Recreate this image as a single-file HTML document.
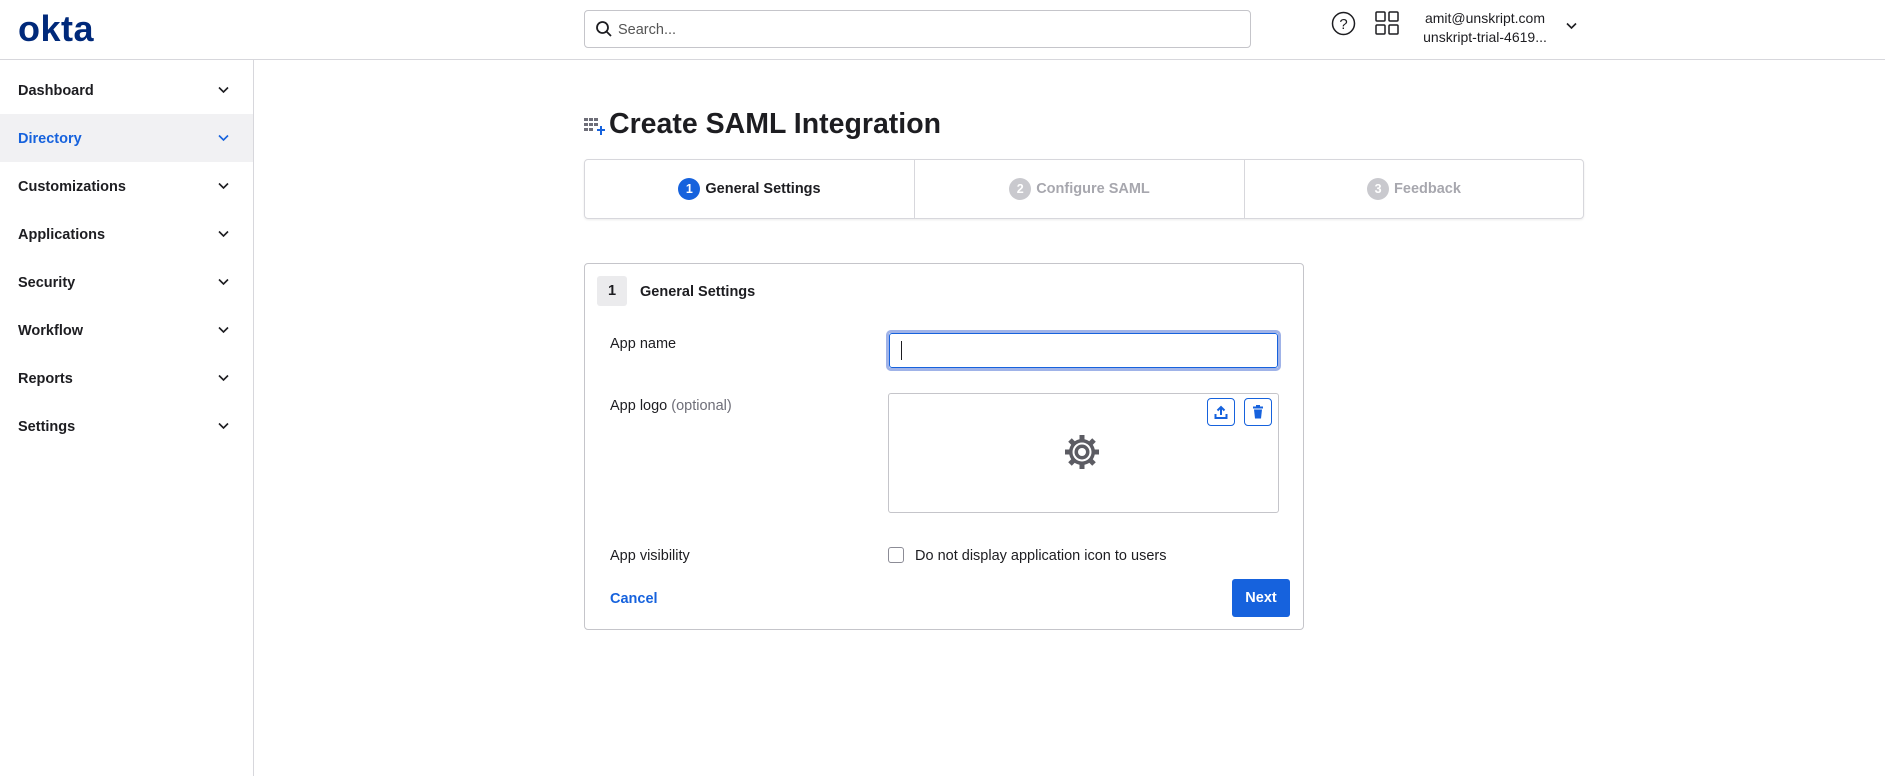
<!DOCTYPE html>
<html><head><meta charset="utf-8"><style>
*{box-sizing:border-box;margin:0;padding:0}
body{width:1885px;height:776px;background:#fff;font-family:"Liberation Sans",sans-serif;color:#1d1d21;position:relative;overflow:hidden;font-size:14.5px}
.abs{position:absolute}
.hdr{left:0;top:0;width:1885px;height:60px;border-bottom:1px solid #d7d7dc}
.side{left:0;top:60px;width:254px;height:716px;border-right:1px solid #d7d7dc}
.item{position:absolute;left:0;width:253px;height:48px;font-weight:bold;font-size:14.5px;padding-left:18px;line-height:50px}
.item svg{position:absolute;left:218px;top:20px}
.step{position:absolute;top:0;height:58px;display:flex;align-items:center;justify-content:center;font-weight:bold;font-size:14.5px;color:#a7a7ae}
.num{width:22px;height:22px;border-radius:50%;background:#c9c9ce;color:#fff;font-size:12.5px;text-align:center;line-height:22px;margin-right:5px}
.lbl{position:absolute;left:610px;font-size:14.5px}
</style></head><body>
<div class="abs hdr"></div>
<div class="abs" style="left:18px;top:8px;font-size:36px;font-weight:bold;color:#00297a;letter-spacing:0.5px">okta</div>
<div class="abs" style="left:584px;top:10px;width:667px;height:38px;border:1px solid #c5c5ca;border-radius:4px"></div>
<svg class="abs" style="left:595px;top:20px" width="18" height="18" viewBox="0 0 18 18"><circle cx="7.5" cy="7.5" r="5.5" fill="none" stroke="#1d1d21" stroke-width="1.8"/><path d="M11.5 11.5L16 16" stroke="#1d1d21" stroke-width="1.8"/></svg>
<div class="abs" style="left:618px;top:22px;color:#555;font-size:14.5px">Search...</div>
<svg class="abs" style="left:1331px;top:11px" width="25" height="25" viewBox="0 0 25 25"><circle cx="12.5" cy="12.5" r="11" fill="none" stroke="#1d1d21" stroke-width="1.5"/><text x="12.5" y="18" text-anchor="middle" font-size="15" font-family="Liberation Sans" fill="#1d1d21">?</text></svg>
<svg class="abs" style="left:1375px;top:11px" width="25" height="25" viewBox="0 0 25 25" fill="none" stroke="#1d1d21" stroke-width="1.5"><rect x="1" y="1" width="9" height="9" rx="1"/><rect x="14" y="1" width="9" height="9" rx="1"/><rect x="1" y="14" width="9" height="9" rx="1"/><rect x="14" y="14" width="9" height="9" rx="1"/></svg>
<div class="abs" style="left:1417px;top:9px;width:136px;text-align:center;font-size:14px;line-height:19px">amit@unskript.com<br>unskript-trial-4619...</div>
<svg class="abs" style="left:1566px;top:22px" width="11" height="8" viewBox="0 0 11 8"><path d="M1 1.5L5.5 6L10 1.5" fill="none" stroke="#1d1d21" stroke-width="1.6"/></svg>
<div class="abs side"></div>
<div class="abs" style="left:0;top:114px;width:253px;height:48px;background:#f1f1f3"></div>
<div class="item" style="top:66px">Dashboard<svg width="11" height="8" viewBox="0 0 11 8"><path d="M1 1.5L5.5 6L10 1.5" fill="none" stroke="#1d1d21" stroke-width="1.6"/></svg></div>
<div class="item" style="top:114px;color:#1662dd">Directory<svg width="11" height="8" viewBox="0 0 11 8"><path d="M1 1.5L5.5 6L10 1.5" fill="none" stroke="#1662dd" stroke-width="1.6"/></svg></div>
<div class="item" style="top:162px">Customizations<svg width="11" height="8" viewBox="0 0 11 8"><path d="M1 1.5L5.5 6L10 1.5" fill="none" stroke="#1d1d21" stroke-width="1.6"/></svg></div>
<div class="item" style="top:210px">Applications<svg width="11" height="8" viewBox="0 0 11 8"><path d="M1 1.5L5.5 6L10 1.5" fill="none" stroke="#1d1d21" stroke-width="1.6"/></svg></div>
<div class="item" style="top:258px">Security<svg width="11" height="8" viewBox="0 0 11 8"><path d="M1 1.5L5.5 6L10 1.5" fill="none" stroke="#1d1d21" stroke-width="1.6"/></svg></div>
<div class="item" style="top:306px">Workflow<svg width="11" height="8" viewBox="0 0 11 8"><path d="M1 1.5L5.5 6L10 1.5" fill="none" stroke="#1d1d21" stroke-width="1.6"/></svg></div>
<div class="item" style="top:354px">Reports<svg width="11" height="8" viewBox="0 0 11 8"><path d="M1 1.5L5.5 6L10 1.5" fill="none" stroke="#1d1d21" stroke-width="1.6"/></svg></div>
<div class="item" style="top:402px">Settings<svg width="11" height="8" viewBox="0 0 11 8"><path d="M1 1.5L5.5 6L10 1.5" fill="none" stroke="#1d1d21" stroke-width="1.6"/></svg></div>

<svg class="abs" style="left:584px;top:116px" width="24" height="24" viewBox="0 0 24 24" fill="#6e6e78"><rect x="0" y="2" width="4" height="3"/><rect x="5" y="2" width="4" height="3"/><rect x="10" y="2" width="4" height="3"/><rect x="0" y="7" width="4" height="3"/><rect x="5" y="7" width="4" height="3"/><rect x="10" y="7" width="4" height="3"/><rect x="0" y="12" width="4" height="3"/><rect x="5" y="12" width="4" height="3"/><path d="M13 13h3v-3h2v3h3v2h-3v4h-2v-4h-3z" fill="#1662dd"/></svg>
<div class="abs" style="left:609px;top:108px;font-size:28.5px;font-weight:bold;color:#1d1d21">Create SAML Integration</div>

<div class="abs" style="left:584px;top:159px;width:1000px;height:60px;border:1px solid #d7d7dc;border-radius:4px;box-shadow:0 1px 2px rgba(0,0,0,.08)">
<div class="step" style="left:0;width:329px;color:#1d1d21"><span class="num" style="background:#1662dd">1</span>General Settings</div>
<div class="step" style="left:329px;width:330px;border-left:1px solid #d7d7dc"><span class="num">2</span>Configure SAML</div>
<div class="step" style="left:659px;width:339px;border-left:1px solid #d7d7dc"><span class="num">3</span>Feedback</div>
</div>

<div class="abs" style="left:584px;top:263px;width:720px;height:367px;border:1px solid #c5c5ca;border-radius:4px"></div>
<div class="abs" style="left:597px;top:276px;width:30px;height:30px;background:#ebebed;border-radius:3px;text-align:center;line-height:30px;font-weight:bold;font-size:14.5px">1</div>
<div class="abs" style="left:640px;top:284px;font-weight:bold;font-size:14.5px">General Settings</div>
<div class="lbl" style="top:336px">App name</div>
<div class="abs" style="left:886px;top:330px;width:395px;height:41px;border:3px solid #a0b3e8;border-radius:5px"></div>
<div class="abs" style="left:889px;top:333px;width:389px;height:35px;border:1px solid #1662dd;border-radius:3px;background:#fff"></div>
<div class="abs" style="left:901px;top:341px;width:1px;height:19px;background:#1d1d21"></div>
<div class="lbl" style="top:398px">App logo <span style="color:#6e6e78">(optional)</span></div>
<div class="abs" style="left:888px;top:393px;width:391px;height:120px;border:1px solid #c5c5ca;border-radius:3px"></div>
<div class="abs" style="left:1207px;top:398px;width:28px;height:28px;border:1px solid #1662dd;border-radius:4px"></div>
<svg class="abs" style="left:1213px;top:404px" width="16" height="16" viewBox="0 0 16 16" fill="none" stroke="#1662dd" stroke-width="2"><path d="M8 11V3M4.5 6.5L8 3l3.5 3.5M2.5 10v4h11v-4"/></svg>
<div class="abs" style="left:1244px;top:398px;width:28px;height:28px;border:1px solid #1662dd;border-radius:4px"></div>
<svg class="abs" style="left:1250px;top:404px" width="16" height="16" viewBox="0 0 16 16" fill="#1662dd"><rect x="3" y="2.5" width="10" height="2"/><rect x="6" y="1" width="4" height="2"/><path d="M4 5.5h8l-1 9H5z"/></svg>
<svg class="abs" style="left:1064px;top:434px" width="36" height="36" viewBox="0 0 36 36"><g fill="#5c5c63"><g transform="translate(18 18)"><rect x="-2.5" y="-17" width="5" height="6"/><rect x="-2.5" y="-17" width="5" height="6" transform="rotate(45)"/><rect x="-2.5" y="-17" width="5" height="6" transform="rotate(90)"/><rect x="-2.5" y="-17" width="5" height="6" transform="rotate(135)"/><rect x="-2.5" y="-17" width="5" height="6" transform="rotate(180)"/><rect x="-2.5" y="-17" width="5" height="6" transform="rotate(225)"/><rect x="-2.5" y="-17" width="5" height="6" transform="rotate(270)"/><rect x="-2.5" y="-17" width="5" height="6" transform="rotate(315)"/></g><circle cx="18" cy="18" r="13"/></g><circle cx="18" cy="18" r="9.5" fill="#fff"/><circle cx="18" cy="18" r="7.5" fill="#5c5c63"/><circle cx="18" cy="18" r="4" fill="#fff"/></svg>
<div class="lbl" style="top:548px">App visibility</div>
<div class="abs" style="left:888px;top:547px;width:16px;height:16px;border:1px solid #8c8c96;border-radius:3px"></div>
<div class="abs" style="left:915px;top:548px;font-size:14.5px">Do not display application icon to users</div>
<div class="abs" style="left:610px;top:591px;color:#1662dd;font-weight:bold;font-size:14.5px">Cancel</div>
<div class="abs" style="left:1232px;top:579px;width:58px;height:38px;background:#1662dd;border-radius:3px;color:#fff;font-weight:bold;font-size:14.5px;text-align:center;line-height:38px">Next</div>
</body></html>
